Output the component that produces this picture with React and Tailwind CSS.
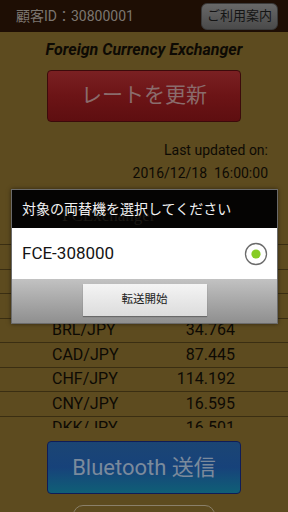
import React from "react";

const rates = [
  { pair: "USD/JPY", rate: "117.950" },
  { pair: "EUR/JPY", rate: "123.109" },
  { pair: "AUD/JPY", rate: "86.283" },
  { pair: "BRL/JPY", rate: "34.764" },
  { pair: "CAD/JPY", rate: "87.445" },
  { pair: "CHF/JPY", rate: "114.192" },
  { pair: "CNY/JPY", rate: "16.595" },
  { pair: "DKK/JPY", rate: "16.501" },
  { pair: "GBP/JPY", rate: "146.330" },
];

const font = { fontFamily: "Roboto, 'Noto Sans CJK JP', sans-serif" };

function Radio() {
  return (
    <svg width="24" height="24" viewBox="0 0 24 24">
      <circle cx="12" cy="12" r="10.5" fill="#fff" stroke="#6b6b6b" strokeWidth="1.3" />
      <circle cx="12" cy="12" r="4.6" fill="#86cc24" />
    </svg>
  );
}

export default function App() {
  return (
    <div
      className="relative w-[288px] h-[512px] overflow-hidden bg-[#5d4b1f] flex flex-col"
      style={font}
    >
      {/* top bar */}
      <div className="h-[32px] shrink-0 bg-[#1e0e04] flex items-center justify-between pl-[16px] pr-[10px]">
        <span className="text-[14px] text-[#7c7670]">顧客ID：30800001</span>
        <button className="h-[27px] px-[5px] rounded-[6px] border border-[#3a3a3a] bg-gradient-to-b from-[#686868] to-[#4a4a4a] text-[13px] text-[#151515]">
          ご利用案内
        </button>
      </div>

      {/* title */}
      <div className="pt-[7px] text-center text-[16px] leading-[22px] font-bold italic text-[#0d0a04]">
        Foreign Currency Exchanger
      </div>

      {/* refresh */}
      <div className="mt-[9px] flex justify-center">
        <button className="w-[194px] h-[52px] rounded-[4px] border border-[#3c0a0b] bg-gradient-to-b from-[#7a2022] via-[#6c1416] to-[#5e0e10] text-[21px] text-[#8a6c6c]">
          レートを更新
        </button>
      </div>

      {/* last updated */}
      <div className="mt-[18px] pr-[20px] text-right text-[14px] leading-[20px] text-[#0d0a04]">
        Last updated on:
      </div>
      <div className="mt-[3px] pr-[20px] text-right text-[14px] leading-[20px] text-[#0d0a04]">
        2016/12/18&nbsp;&nbsp;16:00:00
      </div>

      {/* rate list */}
      <div className="h-[245px] shrink-0 overflow-hidden">
        <div className="h-[61px]" />
        {rates.map((r) => (
          <div
            key={r.pair}
            className="h-[24.5px] border-t border-[#3a2e12] flex items-center text-[16px] text-[#0d0a04]"
          >
            <span className="w-[52px]" />
            <span className="w-[100px]">{r.pair}</span>
            <span className="w-[83px] text-right">{r.rate}</span>
          </div>
        ))}
      </div>

      {/* bluetooth */}
      <div className="mt-[13px] flex justify-center">
        <button className="w-[194px] h-[53px] rounded-[4px] border-[1.5px] border-[#0f1c58] bg-gradient-to-b from-[#1b4574] via-[#17427a] to-[#0f5f76] text-[22px] text-[#7b8a9c]">
          Bluetooth 送信
        </button>
      </div>
      <div className="mt-[11px] flex justify-center">
        <div className="w-[142px] h-[30px] rounded-[10px] border-[1.5px] border-[#8a806a]" />
      </div>

      {/* dialog */}
      <div className="absolute left-[11px] top-[189px] w-[267px] border border-[#6a6a6a] shadow-[0_0_4px_rgba(0,0,0,0.5)]">
        <div className="relative h-[38px] bg-[#050403] flex items-center pl-[10px] text-[14px] text-[#f2f2f2]">
          <span
            className="absolute left-[50px] top-[16px] text-[17px] leading-[20px] text-[#1a1814]"
            style={{ fontFamily: "'Liberation Serif', serif" }}
          >
            FCExchanger
          </span>
          <span className="relative">対象の両替機を選択してください</span>
        </div>
        <div className="h-[51px] bg-white flex items-center justify-between pl-[10px] pr-[9px]">
          <span className="text-[17px] text-[#141414]">FCE-308000</span>
          <Radio />
        </div>
        <div className="h-[44px] bg-gradient-to-b from-[#c2c2c2] to-[#8f8f8f] flex justify-center pt-[5px]">
          <button className="w-[124px] h-[32px] bg-gradient-to-b from-[#f4f4f4] to-[#dcdcdc] shadow-[0_1px_1px_rgba(0,0,0,0.3)] text-[11.5px] text-[#222]">
            転送開始
          </button>
        </div>
      </div>
    </div>
  );
}
